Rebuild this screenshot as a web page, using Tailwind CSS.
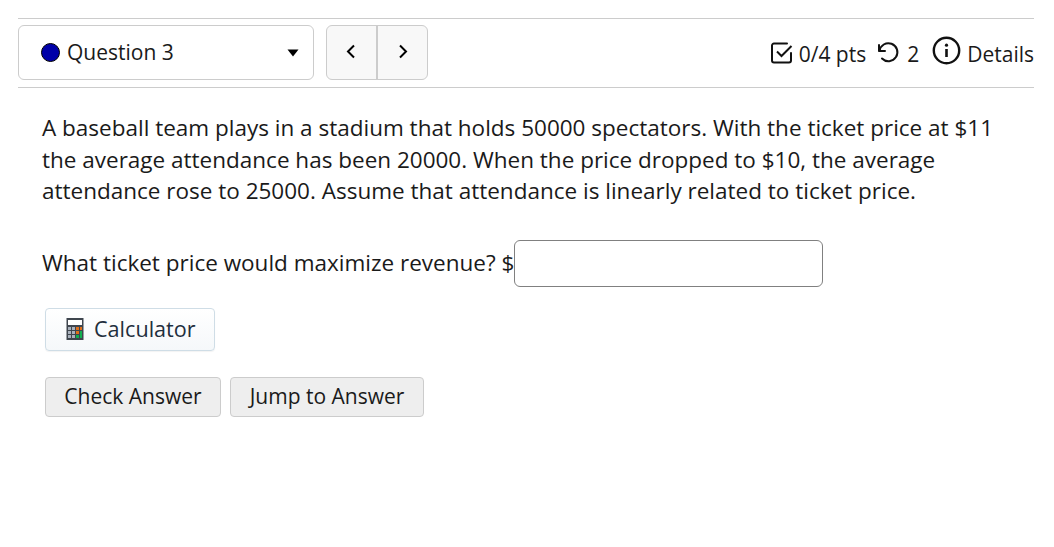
<!DOCTYPE html>
<html lang="en">
<head>
  <meta charset="UTF-8" />
  <title>Question 3</title>
  <script src="https://cdn.jsdelivr.net/npm/@tailwindcss/browser@4"></script>
</head>
<body class="bg-white font-['Open_Sans',sans-serif] text-[#1a1a1a] h-[547px] overflow-hidden">
  <div class="ml-[18px] w-[1016px] pt-[18px]">
    <header class="h-[70px] border-y border-[#cccccc] flex items-start">
      <div class="mt-[6px] w-[296px] h-[55px] border border-[#cccccc] rounded-[6px] flex items-center pl-[22px] pr-[14px]">
        <span class="w-[19px] h-[19px] rounded-full bg-[#0000a8] border border-black"></span>
        <span class="ml-[7px] text-[21px]">Question 3</span>
        <svg class="ml-auto" width="12" height="8" viewBox="0 0 12 8"><path d="M0.5 0.5h11L6 7.5z" fill="#000" /></svg>
      </div>
      <div class="mt-[6px] ml-[12px] w-[102px] h-[55px] border border-[#cccccc] rounded-[6px] bg-[#f8f8f8] flex">
        <button class="w-[51px] border-r-2 border-[#cccccc] flex items-center justify-center pb-[3px] pr-[2px]">
          <svg width="10" height="15" viewBox="0 0 10 15" fill="none" stroke="#000" stroke-width="2"><path d="M8 1.5L2 7.5l6 6" /></svg>
        </button>
        <button class="flex-1 flex items-center justify-center pb-[3px]">
          <svg width="10" height="15" viewBox="0 0 10 15" fill="none" stroke="#000" stroke-width="2"><path d="M2 1.5l6 6-6 6" /></svg>
        </button>
      </div>
      <div class="ml-auto h-full flex items-center text-[21px]">
        <svg class="mr-[6px]" width="22" height="22" viewBox="0 0 22 22" fill="none" stroke="#111" stroke-width="2"><path d="M20 11v7.5a2 2 0 0 1-2 2H3a2 2 0 0 1-2-2V3.500a2 2 0 0 1 2-2h13" stroke-linecap="round" /><path d="M6 9.500l4.500 4.500 10-10" /></svg>
        <span class="pt-[3px]">0/4 pts</span>
        <svg class="ml-[10px] mr-[7px]" width="24" height="24" viewBox="0 0 24 24" fill="none" stroke="#111" stroke-width="2" stroke-linecap="round" stroke-linejoin="round"><path d="M3 4v6h6" /><path d="M3.500 10A9 9 0 1 1 6 17.500" /></svg>
        <span class="pt-[3px]">2</span>
        <svg class="ml-[13px] mr-[6px] mb-[5px]" width="29" height="29" viewBox="0 0 29 29" fill="none"><circle cx="14.5" cy="14.5" r="12.7" stroke="#111" stroke-width="2.4" /><circle cx="14.5" cy="9.2" r="1.6" fill="#111" /><path d="M14.5 13v8" stroke="#111" stroke-width="2.6" /></svg>
        <span class="pt-[3px]">Details</span>
      </div>
    </header>
    <main class="pl-[24px] pt-[24px]">
      <p class="text-[22.5px] leading-[31.5px] w-[970px]">A baseball team plays in a stadium that holds 50000 spectators. With the ticket price at $11 the average attendance has been 20000. When the price dropped to $10, the average attendance rose to 25000. Assume that attendance is linearly related to ticket price.</p>
      <div class="mt-[33px] flex items-center text-[22.5px] h-[47px]">
        <span>What ticket price would maximize revenue? $</span>
        <input type="text" class="w-[309px] h-[47px] border border-[#808080] rounded-[6px] bg-white" />
      </div>
      <button class="mt-[21px] ml-[3px] w-[170px] h-[43px] flex items-center border border-[#cfdde6] rounded-[4px] bg-gradient-to-b from-white to-[#f5f8fa] text-[#1f2f3d] text-[21.6px] pl-[20px] shadow-[0_1px_1px_rgba(0,0,0,0.05)]">
        <svg width="18" height="24" viewBox="0 0 18 24">
          <rect x="0.5" y="1" width="17" height="22" fill="#3f464e" />
          <rect x="2" y="3" width="14" height="5" fill="#fff" />
          <g fill="#aab2bd">
            <rect x="2" y="10" width="3" height="3" /><rect x="6" y="10" width="3" height="3" />
            <rect x="2" y="14" width="3" height="3" /><rect x="6" y="14" width="3" height="3" />
            <rect x="2" y="18" width="3" height="3" /><rect x="6" y="18" width="3" height="3" />
          </g>
          <g fill="#e0701a"><rect x="10" y="10" width="3" height="3" /><rect x="14" y="10" width="2" height="3" /><rect x="10" y="14" width="3" height="3" /></g>
          <rect x="14" y="14" width="2" height="7" fill="#12b050" /><rect x="10" y="18" width="3" height="3" fill="#12b050" />
        </svg>
        <span class="ml-[10px]">Calculator</span>
      </button>
      <div class="mt-[26px] ml-[3px] flex gap-[9px] text-[21px]">
        <button class="w-[176px] h-[40px] bg-[#eeeeee] border border-[#cccccc] rounded-[4px]">Check Answer</button>
        <button class="w-[194px] h-[40px] bg-[#eeeeee] border border-[#cccccc] rounded-[4px]">Jump to Answer</button>
      </div>
    </main>
  </div>
</body>
</html>
